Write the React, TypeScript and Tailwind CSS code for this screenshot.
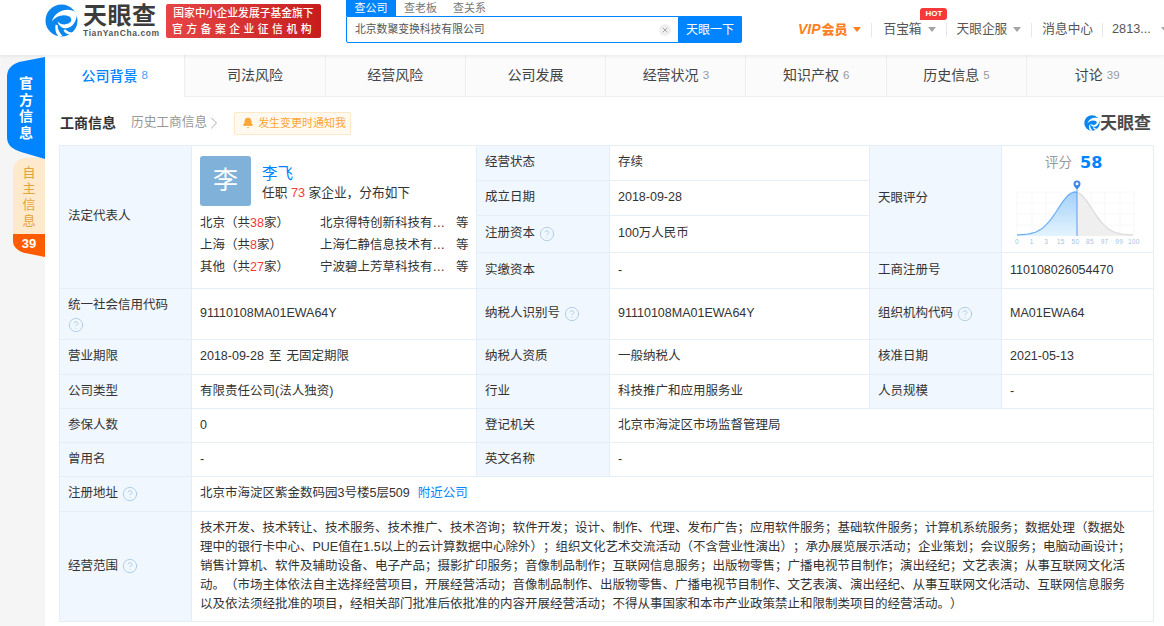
import { Bell, ChevronRight, CircleHelp, X } from "lucide-react";
import type { ReactNode } from "react";

const tabs = [
  ["公司背景", "8"],
  ["司法风险", ""],
  ["经营风险", ""],
  ["公司发展", ""],
  ["经营状况", "3"],
  ["知识产权", "6"],
  ["历史信息", "5"],
  ["讨论", "39"],
];

const regions = [
  ["北京", "38", "北京得特创新科技有…"],
  ["上海", "8", "上海仁静信息技术有…"],
  ["其他", "27", "宁波碧上芳草科技有…"],
];

const scope = [
  "技术开发、技术转让、技术服务、技术推广、技术咨询；软件开发；设计、制作、代理、发布广告；应用软件服务；基础软件服务；计算机系统服务；数据处理（数据处",
  "理中的银行卡中心、PUE值在1.5以上的云计算数据中心除外）；组织文化艺术交流活动（不含营业性演出）；承办展览展示活动；企业策划；会议服务；电脑动画设计；",
  "销售计算机、软件及辅助设备、电子产品；摄影扩印服务；音像制品制作；互联网信息服务；出版物零售；广播电视节目制作；演出经纪；文艺表演；从事互联网文化活",
  "动。（市场主体依法自主选择经营项目，开展经营活动；音像制品制作、出版物零售、广播电视节目制作、文艺表演、演出经纪、从事互联网文化活动、互联网信息服务",
  "以及依法须经批准的项目，经相关部门批准后依批准的内容开展经营活动；不得从事国家和本市产业政策禁止和限制类项目的经营活动。）",
];

function LogoMark({ size }: { size: number }) {
  return (
    <svg width={size} height={size} viewBox="0 0 34 34" className="shrink-0">
      <circle cx="17" cy="17" r="16.5" fill="#0b86ee" />
      {/* white swirl blades */}
      <path d="M33 9C24 3 11 6 7 18c5-6 12-8 18-5 3 2 3 6-1 7l-4 1c-3 0-5-1-7-3 1 4 4 7 8 7 7 0 12-7 12-16z" fill="#fff" />
      <path d="M13 22c0 4 2 8 5 11l-3 1c-4-3-5-8-4-13z" fill="#fff" />
      <path d="M21 26c3 3 6 4 9 3l-2 2c-3 1-7 0-9-4z" fill="#fff" />
    </svg>
  );
}

function Caret({ color }: { color: string }) {
  return (
    <svg width="8" height="5" viewBox="0 0 8 5" className="shrink-0">
      <path d="M0 0h8L4 5z" fill={color} />
    </svg>
  );
}

function Divider() {
  return <span className="block h-3.5 w-px bg-[#e8e8e8]" />;
}

function Help() {
  return <CircleHelp size={16} strokeWidth={1.3} className="inline-block shrink-0 text-[#a8c8e2]" />;
}

function Label({ children, rowSpan, help }: { children: ReactNode; rowSpan?: number; help?: boolean }) {
  return (
    <td rowSpan={rowSpan} className="border border-[#e5edf5] bg-[#f0f7fe] px-2 pb-[1px] align-middle">
      <span className="inline-flex items-center gap-[4px]">
        {children}
        {help && <Help />}
      </span>
    </td>
  );
}

function Value({ children, colSpan, rowSpan }: { children: ReactNode; colSpan?: number; rowSpan?: number }) {
  return (
    <td colSpan={colSpan} rowSpan={rowSpan} className="border border-[#e5edf5] px-2 pb-[1px] align-middle">
      {children}
    </td>
  );
}

function ScoreChart() {
  const y = (x: number) => 235 - 43 * Math.exp(-((x - 1075) ** 2) / (2 * 17 * 17));
  const line = (from: number, to: number) => {
    let d = "";
    for (let x = from; x <= to; x += 2) d += `${d ? "L" : "M"}${x - 1007} ${y(x).toFixed(1)} `;
    return d;
  };
  const left = line(1017, 1077);
  const right = line(1077, 1134);
  const labels = ["0", "1", "3", "15", "50", "85", "97", "99", "100"];
  return (
    <svg width="140" height="70" viewBox="0 176 140 70" className="block">
      <defs>
        <linearGradient id="scoreFill" x1="0" y1="0" x2="0" y2="1">
          <stop offset="0" stopColor="#a3d0f9" />
          <stop offset="1" stopColor="#e3f4fd" />
        </linearGradient>
      </defs>
      {[10, 25, 39, 54, 70, 84, 98, 113, 127].map((x) => (
        <path key={x} d={`M${x} 192V236`} stroke="#f7f7f7" />
      ))}
      {[192, 203, 214, 225].map((gy) => (
        <path key={gy} d={`M10 ${gy}H127`} stroke="#f8f8f8" />
      ))}
      <path d={`${left}L70 236L10 236Z`} fill="url(#scoreFill)" />
      <path d={`${right}L127 236L70 236Z`} fill="#efefef" />
      <path d={left} fill="none" stroke="#6fb0f5" strokeWidth="1.3" />
      <path d={right} fill="none" stroke="#dcdcdc" strokeWidth="1.3" />
      <path d="M70 190V236" stroke="#5c9df2" />
      <path d="M70 190c-2-3-3.500-4-3.500-6a3.500 3.500 0 0 1 7 0c0 2-1.500 3-3.500 6z" fill="#3d85ea" />
      <circle cx="70" cy="183.800" r="1.500" fill="#fff" />
      {labels.map((t, i) => (
        <text key={t} x={10 + i * 14.600} y="244" textAnchor="middle" fontSize="6.500" fill="#a9bfe0" letterSpacing="0.3">
          {t}
        </text>
      ))}
    </svg>
  );
}

export default function App() {
  return (
    <div className="flex h-[626px] w-[1164px] flex-col overflow-hidden bg-white font-['Liberation_Sans','Noto_Sans_CJK_SC',sans-serif] text-[12.5px] text-[#333] [text-spacing-trim:space-all]">
      {/* Header */}
      <header className="relative z-10 flex h-[55px] shrink-0 items-start bg-white pl-[45px] shadow-[0_1px_4px_rgba(0,0,0,0.08)]">
        <div className="mt-1 flex w-[111px] shrink-0 items-start gap-[5px]">
          <LogoMark size={33} />
          <div className="flex flex-col">
            <span className="whitespace-nowrap text-[24px] font-bold leading-[24px] tracking-[0.5px] text-[#3c3c3c]">天眼查</span>
            <span className="mt-[1px] whitespace-nowrap text-[8.5px] font-bold leading-[9px] tracking-[0.6px] text-[#555]">TianYanCha.com</span>
          </div>
        </div>
        <div className="mt-1 ml-[10px] flex h-[34px] w-[155px] shrink-0 flex-col items-center justify-center rounded-[2px] bg-gradient-to-r from-[#e64446] to-[#c71c1c] text-[10.8px] font-medium leading-[16px] text-white">
          <span className="whitespace-nowrap">国家中小企业发展子基金旗下</span>
          <span className="whitespace-nowrap tracking-[3.500px]">官方备案企业征信机构</span>
        </div>
        <div className="ml-[25px] flex w-[396px] shrink-0 flex-col">
          <div className="flex h-4 items-center text-[11px] text-[#777]">
            <span className="flex h-4 w-[50px] items-center justify-center bg-[#0084ff] text-white">查公司</span>
            <span className="ml-2">查老板</span>
            <span className="ml-4">查关系</span>
          </div>
          <div className="flex h-[27px] items-stretch rounded-b-[2px] border border-[#0084ff]">
            <div className="flex flex-1 items-center pl-2 pr-[7px] text-[10.8px] text-[#555]">
              <span className="flex-1">北京数聚变换科技有限公司</span>
              <span className="flex h-3 w-3 items-center justify-center rounded-full bg-[#efefef]">
                <X size={8} strokeWidth={3} className="text-[#aaa]" />
              </span>
            </div>
            <span className="-mr-px flex w-[64px] items-center justify-center bg-[#0084ff] text-[12px] text-white">天眼一下</span>
          </div>
        </div>
        <nav className="mt-[19px] ml-[56px] flex items-center whitespace-nowrap text-[12.7px] text-[#555]">
          <span className="text-[14px] font-black text-[#ff7f24]">
            <span className="italic">VIP</span> <span className="-ml-[3px] text-[13px]">会员</span>
          </span>
          <span className="ml-[6px]"><Caret color="#ff7f24" /></span>
          <span className="mx-[10px]"><Divider /></span>
          <span className="relative ml-[1px]">
            百宝箱
            <span className="absolute -top-[12px] left-[37px] rounded-[3px] rounded-bl-none bg-[#f5393a] px-[5px] text-[8px] font-bold leading-[12px] text-white">HOT</span>
          </span>
          <span className="ml-[6px]"><Caret color="#a5a5a5" /></span>
          <span className="mx-[10px]"><Divider /></span>
          <span>天眼企服</span>
          <span className="ml-[6px]"><Caret color="#a5a5a5" /></span>
          <span className="mx-[10px]"><Divider /></span>
          <span>消息中心</span>
          <span className="mx-[9px]"><Divider /></span>
          <span>2813...</span>
          <span className="ml-[10px]"><Caret color="#a5a5a5" /></span>
        </nav>
      </header>

      <div className="flex min-h-0 flex-1">
        {/* Side tabs */}
        <aside className="relative w-[45px] shrink-0 bg-[#f5f5f5]">
          <div className="absolute top-[102px] left-[13px] h-[100px] w-8">
            <svg width="32" height="100" viewBox="0 0 32 100" className="absolute inset-0">
              <path d="M32 0V77H0V14C0 6 5 2 12 1z" fill="#fdeacd" />
              <path d="M0 77H32V100L12 96C5 94 0 90 0 84z" fill="#ff5c00" />
            </svg>
            <div className="absolute top-[8px] left-0 flex w-full flex-col items-center text-[13px] leading-[16px] text-[#e2a33c]">
              <span>自</span>
              <span>主</span>
              <span>信</span>
              <span>息</span>
            </div>
            <div className="absolute top-[77px] left-0 w-full text-center text-[13px] font-bold leading-[20px] text-white">39</div>
          </div>
          <div className="absolute top-[2px] left-[7px] h-[102px] w-[38px]">
            <svg width="38" height="102" viewBox="0 0 38 102" className="absolute inset-0">
              <path d="M38 0V102L14 95C5 92 0 88 0 80V20C0 12 4 8 12 5z" fill="#0084ff" />
            </svg>
            <div className="absolute top-[18px] left-0 flex w-full flex-col items-center text-[14px] font-bold leading-[16.500px] text-white">
              <span>官</span>
              <span>方</span>
              <span>信</span>
              <span>息</span>
            </div>
          </div>
        </aside>

        <main className="min-w-0 flex-1 overflow-hidden">
          {/* Tabs */}
          <div className="grid h-[42px] grid-cols-[repeat(8,140.3px)] bg-[#fbfbfb] text-[14px]">
            {tabs.map(([name, count], i) => (
              <div
                key={name}
                className={
                  i === 0
                    ? "flex items-center justify-center gap-1 border-r border-[#eee] bg-white font-medium text-[#0084ff]"
                    : "flex items-center justify-center gap-1 border-r border-b border-[#eee] text-[#444] last:border-r-0"
                }
              >
                <span>{name}</span>
                {count && <span className={i === 0 ? "text-[11.500px] font-normal text-[#4a9dff]" : "text-[11.500px] text-[#999]"}>{count}</span>}
              </div>
            ))}
          </div>

          {/* Section title */}
          <div className="mt-[14px] mb-[10px] flex h-[24px] items-center pr-[13px] pl-[15px]">
            <span className="text-[14px] font-bold text-[#333]">工商信息</span>
            <span className="ml-[15px] text-[12.700px] text-[#999]">历史工商信息</span>
            <ChevronRight size={20} strokeWidth={1} className="-ml-[3px] text-[#999]" />
            <span className="ml-[10px] flex h-[23px] w-[117px] items-center gap-[4px] rounded-[2px] border border-[#ffe9c8] bg-[#fff9ef] pl-[7px] text-[11px] text-[#ffa536]">
              <Bell size={12} fill="#ffa536" strokeWidth={1.5} />
              发生变更时通知我
            </span>
            <span className="ml-auto flex items-center">
              <LogoMark size={16} />
              <span className="text-[17px] font-bold leading-none text-[#4a4a4a]">天眼查</span>
            </span>
          </div>

          {/* Table */}
          <table className="ml-[14px] w-[1094px] table-fixed border-collapse leading-[19px]">
            <colgroup>
              <col className="w-[132px]" />
              <col className="w-[285px]" />
              <col className="w-[133px]" />
              <col className="w-[260px]" />
              <col className="w-[132px]" />
              <col className="w-[152px]" />
            </colgroup>
            <tbody>
              <tr className="h-[35px]">
                <Label rowSpan={4}>法定代表人</Label>
                <Value rowSpan={4}>
                  <div className="flex items-center gap-[11px]">
                    <div className="flex h-[50px] w-[51px] items-center justify-center rounded-[3px] bg-[#7fb1d9] text-[25px] text-white">李</div>
                    <div className="mt-[4px] flex flex-col">
                      <span className="text-[15.500px] leading-[20px] text-[#0084ff]">李飞</span>
                      <span className="whitespace-nowrap text-[12.700px] leading-[18px]">
                        任职 <span className="text-[#f5393a]">73</span> 家企业，分布如下
                      </span>
                    </div>
                  </div>
                  <div className="mt-[6px] grid grid-cols-[120px_126px_1fr] items-center text-[12.500px] leading-[22px]">
                    {regions.map(([city, n, company]) => (
                      <div key={city} className="contents">
                        <span className="whitespace-nowrap">
                          {city}（共<span className="text-[#f5393a]">{n}</span>家）
                        </span>
                        <span className="whitespace-nowrap">{company}</span>
                        <span className="pl-[10px]">等</span>
                      </div>
                    ))}
                  </div>
                </Value>
                <Label>经营状态</Label>
                <Value>存续</Value>
                <Label rowSpan={3}>天眼评分</Label>
                <Value rowSpan={3}>
                  <div className="-ml-[3px] flex flex-col items-start">
                    <div className="ml-[38px] flex h-[22px] items-center gap-2">
                      <span className="text-[13.500px] text-[#999]">评分</span>
                      <span className="font-['DejaVu_Sans',sans-serif] text-[16px] font-bold leading-[20px] text-[#0084ff]">58</span>
                    </div>
                    <div className="mt-[2px]">
                      <ScoreChart />
                    </div>
                  </div>
                </Value>
              </tr>
              <tr className="h-[35px]">
                <Label>成立日期</Label>
                <Value>2018-09-28</Value>
              </tr>
              <tr className="h-[37px]">
                <Label help>注册资本</Label>
                <Value>100万人民币</Value>
              </tr>
              <tr className="h-[36px]">
                <Label>实缴资本</Label>
                <Value>-</Value>
                <Label>工商注册号</Label>
                <Value>110108026054470</Value>
              </tr>
              <tr className="h-[51px]">
                <td className="border border-[#e5edf5] bg-[#f0f7fe] px-2 align-middle">
                  统一社会信用代码
                  <span className="mt-[2px] block leading-[14px]"><Help /></span>
                </td>
                <Value>91110108MA01EWA64Y</Value>
                <Label help>纳税人识别号</Label>
                <Value>91110108MA01EWA64Y</Value>
                <Label help>组织机构代码</Label>
                <Value>MA01EWA64</Value>
              </tr>
              <tr className="h-[35px]">
                <Label>营业期限</Label>
                <Value>
                  2018-09-28<span className="mx-[5px]">至</span>无固定期限
                </Value>
                <Label>纳税人资质</Label>
                <Value>一般纳税人</Value>
                <Label>核准日期</Label>
                <Value>2021-05-13</Value>
              </tr>
              <tr className="h-[34px]">
                <Label>公司类型</Label>
                <Value>有限责任公司(法人独资)</Value>
                <Label>行业</Label>
                <Value>科技推广和应用服务业</Value>
                <Label>人员规模</Label>
                <Value>-</Value>
              </tr>
              <tr className="h-[34px]">
                <Label>参保人数</Label>
                <Value>0</Value>
                <Label>登记机关</Label>
                <Value colSpan={3}>北京市海淀区市场监督管理局</Value>
              </tr>
              <tr className="h-[34px]">
                <Label>曾用名</Label>
                <Value>-</Value>
                <Label>英文名称</Label>
                <Value colSpan={3}>-</Value>
              </tr>
              <tr className="h-[35px]">
                <Label help>注册地址</Label>
                <Value colSpan={5}>
                  北京市海淀区紫金数码园3号楼5层509
                  <span className="ml-[8px] text-[#0084ff]">附近公司</span>
                </Value>
              </tr>
              <tr className="h-[110px]">
                <Label help>经营范围</Label>
                <Value colSpan={5}>
                  {scope.map((l) => (
                    <div key={l} className="whitespace-nowrap">{l}</div>
                  ))}
                </Value>
              </tr>
            </tbody>
          </table>
        </main>
      </div>
    </div>
  );
}
